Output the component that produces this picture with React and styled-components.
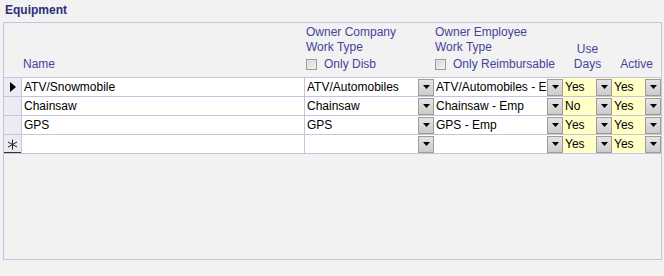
import React from 'react';
import styled, { createGlobalStyle } from 'styled-components';

const GlobalStyle = createGlobalStyle`
  html, body {
    margin: 0;
    padding: 0;
    background: #f2f2f2;
    font-family: "Liberation Sans", Arial, sans-serif;
  }
`;

const COLS = '18px 283px 129px 129px 49px 49px';

const Page = styled.div`
  width: 664px;
  height: 276px;
  background: #f2f2f2;
  padding: 0 3px;
  box-sizing: border-box;
`;

const Title = styled.div`
  height: 22px;
  padding: 3px 0 0 2px;
  box-sizing: border-box;
  font-size: 12px;
  font-weight: bold;
  color: #2e2e78;
`;

const Panel = styled.div`
  width: 659px;
  height: 238px;
  box-sizing: border-box;
  border: 1px solid #c4c4e2;
  background: #f2f2f2;
`;

const HeaderRow = styled.div`
  display: grid;
  grid-template-columns: ${COLS};
  height: 54px;
`;

const HeadCell = styled.div`
  display: flex;
  flex-direction: column;
  justify-content: flex-end;
  align-items: ${(p) => (p.center ? 'center' : 'flex-start')};
  padding: 0 0 5px ${(p) => (p.center ? 0 : 1)}px;
  font-size: 12px;
  line-height: 15px;
  color: #44449a;
  white-space: nowrap;
`;

const CheckLine = styled.div`
  display: flex;
  align-items: center;
  gap: 7px;
  margin-top: 2px;
`;

const Box = styled.span`
  display: inline-block;
  width: 11px;
  height: 11px;
  box-sizing: border-box;
  border: 1px solid #9a9a9a;
  background: linear-gradient(135deg, #d6d6d6, #f4f4f4);
  box-shadow: inset 1px 1px 0 #e8e8e8;
`;

const Body = styled.div`
  border-top: 1px solid #c4c4e2;
`;

const DataRow = styled.div`
  display: grid;
  grid-template-columns: ${COLS};
  height: 19px;
  box-sizing: border-box;
  border-bottom: 1px solid #c4c4e2;
`;

const Selector = styled.div`
  display: flex;
  align-items: center;
  justify-content: center;
  background: #ebebf3;
  border-right: 1px solid #c4c4e2;
  box-shadow: ${(p) => (p.last ? 'inset 0 -1px 0 #333' : 'none')};
`;

const Cell = styled.div`
  display: flex;
  align-items: center;
  background: ${(p) => (p.yellow ? '#ffffc6' : '#fff')};
  border-right: ${(p) => (p.divider ? '1px solid #c4c4e2' : 'none')};
  font-size: 12px;
  color: #000;
  overflow: hidden;
  white-space: nowrap;
`;

const CellText = styled.span`
  flex: 1;
  overflow: hidden;
  padding-left: 2px;
`;

const DropButton = styled.span`
  flex: none;
  width: 16px;
  height: 17px;
  box-sizing: border-box;
  border: 1px solid;
  border-color: #f0f0f0 #6a6a6a #6a6a6a #f0f0f0;
  outline: 1px solid #9c9c9c;
  outline-offset: -1px;
  background: linear-gradient(#e4e4e4, #cbcbcb);
  display: flex;
  align-items: center;
  justify-content: center;
`;

const Arrow = () => (
  <svg width="7" height="4" viewBox="0 0 7 4">
    <path d="M0 0h7L3.5 4z" fill="#000" />
  </svg>
);

const Star = () => (
  <svg width="11" height="11" viewBox="0 0 11 11">
    <path d="M5.5 0.5v10M1 3l9 5M1 8l9-5" stroke="#222" strokeWidth="1" fill="none" />
  </svg>
);

const Combo = ({ value, yellow }) => (
  <Cell yellow={yellow}>
    <CellText>{value}</CellText>
    <DropButton>
      <Arrow />
    </DropButton>
  </Cell>
);

const rows = [
  { name: 'ATV/Snowmobile', company: 'ATV/Automobiles', employee: 'ATV/Automobiles - Emp', days: 'Yes', active: 'Yes', current: true },
  { name: 'Chainsaw', company: 'Chainsaw', employee: 'Chainsaw - Emp', days: 'No', active: 'Yes' },
  { name: 'GPS', company: 'GPS', employee: 'GPS - Emp', days: 'Yes', active: 'Yes' },
  { name: '', company: '', employee: '', days: 'Yes', active: 'Yes', isNew: true },
];

export default function App() {
  return (
    <Page>
      <GlobalStyle />
      <Title>Equipment</Title>
      <Panel>
        <HeaderRow>
          <HeadCell />
          <HeadCell>Name</HeadCell>
          <HeadCell>
            <span>Owner Company</span>
            <span>Work Type</span>
            <CheckLine>
              <Box />
              Only Disb
            </CheckLine>
          </HeadCell>
          <HeadCell>
            <span>Owner Employee</span>
            <span>Work Type</span>
            <CheckLine>
              <Box />
              Only Reimbursable
            </CheckLine>
          </HeadCell>
          <HeadCell center>
            <span>Use</span>
            <span>Days</span>
          </HeadCell>
          <HeadCell center>Active</HeadCell>
        </HeaderRow>
        <Body>
          {rows.map((r, i) => (
            <DataRow key={i}>
              <Selector last={r.isNew}>
                {r.current && (
                  <svg width="6" height="10" viewBox="0 0 6 10">
                    <path d="M0 0l6 5-6 5z" fill="#000" />
                  </svg>
                )}
                {r.isNew && <Star />}
              </Selector>
              <Cell divider>
                <CellText>{r.name}</CellText>
              </Cell>
              <Combo value={r.company} />
              <Combo value={r.employee} />
              <Combo value={r.days} yellow />
              <Combo value={r.active} yellow />
            </DataRow>
          ))}
        </Body>
      </Panel>
    </Page>
  );
}
